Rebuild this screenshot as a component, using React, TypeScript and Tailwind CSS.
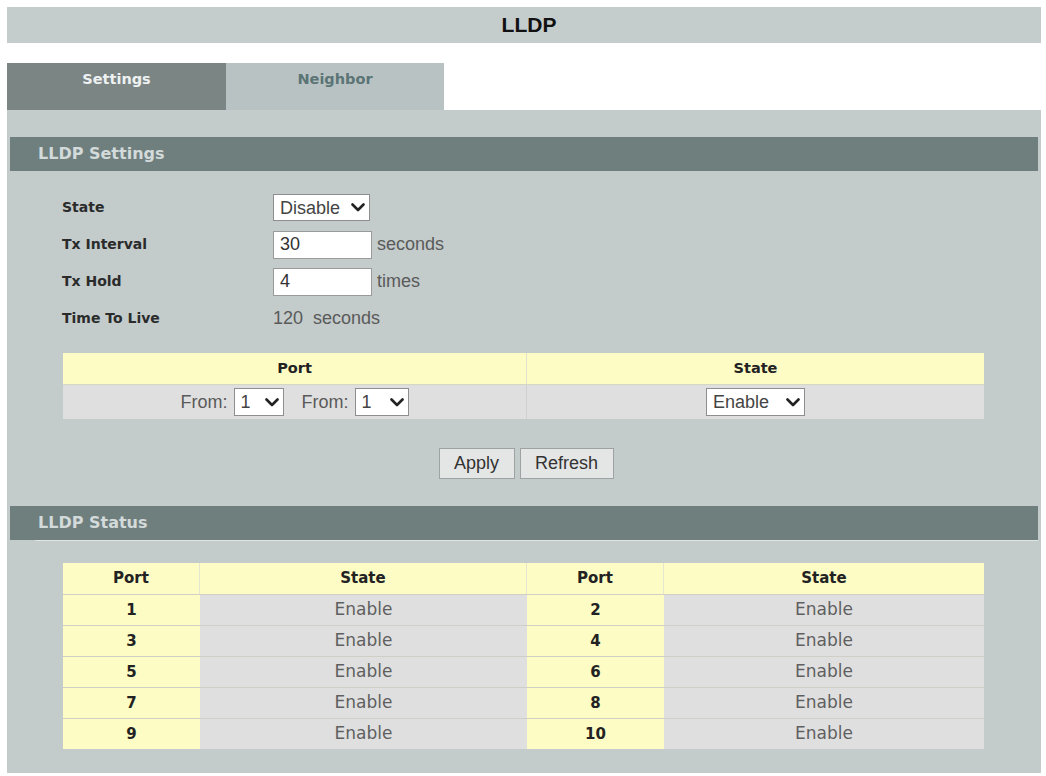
import React from "react";

const Chevron = () => (
  <svg width="14" height="9" viewBox="0 0 14 9" className="shrink-0">
    <polyline points="1.5,1.5 7,7 12.5,1.5" fill="none" stroke="#222" strokeWidth="2.6" strokeLinecap="round" strokeLinejoin="round" />
  </svg>
);

const FakeSelect = ({ value, w }: { value: string; w: string }) => (
  <div className={`flex items-center justify-between h-[28px] bg-white border border-[#8e8e8e] pl-[6px] pr-[4px] ${w}`}>
    <span className="text-[18px] leading-none text-[#444]">{value}</span>
    <Chevron />
  </div>
);

const statusRows = [
  ["1", "2"],
  ["3", "4"],
  ["5", "6"],
  ["7", "8"],
  ["9", "10"],
];

export default function App() {
  return (
    <div className="w-[1046px] h-[776px] bg-white pt-[7px] pl-[7px] pr-[5px] font-['Liberation_Sans',Arial,sans-serif] overflow-hidden">
      {/* Title bar */}
      <div className="h-[36px] bg-[#c5cdcc] flex items-center justify-center pl-[10px]">
        <span className="text-[21px] font-bold text-[#111] font-['Liberation_Sans',Arial,sans-serif]">LLDP</span>
      </div>

      {/* Tabs */}
      <div className="mt-[20px] flex h-[47px]">
        <div className="w-[219px] bg-[#7b8584] flex justify-center pt-[6px] text-[14.5px] font-bold text-[#eef1f1] font-['DejaVu_Sans',Verdana,sans-serif]">
          Settings
        </div>
        <div className="w-[218px] bg-[#b9c2c2] flex justify-center pt-[6px] text-[14.5px] font-bold text-[#5b7476] font-['DejaVu_Sans',Verdana,sans-serif]">
          Neighbor
        </div>
      </div>

      {/* Panel */}
      <div className="bg-[#c3cbcb] h-[663px] pt-[27px] px-[3px]">
        {/* LLDP Settings header */}
        <div className="h-[34px] bg-[#6f7f7e] flex items-center pl-[28px]">
          <span className="text-[16px] font-bold text-[#d3dada] font-['DejaVu_Sans',Verdana,sans-serif]">LLDP Settings</span>
        </div>

        {/* Form */}
        <div className="pl-[52px] pt-[18px]">
          <div className="flex items-center h-[37px]">
            <div className="w-[211px] text-[14px] font-bold text-[#2b2b2b] font-['DejaVu_Sans',Verdana,sans-serif]">State</div>
            <div className="flex items-center justify-between h-[27px] w-[97px] bg-white border border-[#8e8e8e] pl-[6px] pr-[4px]">
              <span className="text-[18px] leading-none text-[#444]">Disable</span>
              <Chevron />
            </div>
          </div>
          <div className="flex items-center h-[37px]">
            <div className="w-[211px] text-[14px] font-bold text-[#2b2b2b] font-['DejaVu_Sans',Verdana,sans-serif]">Tx Interval</div>
            <input
              readOnly
              value="30"
              className="h-[28px] w-[99px] bg-white border border-[#9a9a9a] px-[6px] text-[18px] text-[#333] outline-none"
            />
            <span className="ml-[5px] text-[18px] text-[#5a5a5a]">seconds</span>
          </div>
          <div className="flex items-center h-[37px]">
            <div className="w-[211px] text-[14px] font-bold text-[#2b2b2b] font-['DejaVu_Sans',Verdana,sans-serif]">Tx Hold</div>
            <input
              readOnly
              value="4"
              className="h-[28px] w-[99px] bg-white border border-[#9a9a9a] px-[6px] text-[18px] text-[#333] outline-none"
            />
            <span className="ml-[5px] text-[18px] text-[#5a5a5a]">times</span>
          </div>
          <div className="flex items-center h-[37px]">
            <div className="w-[211px] text-[14px] font-bold text-[#2b2b2b] font-['DejaVu_Sans',Verdana,sans-serif]">Time To Live</div>
            <span className="text-[18px] text-[#5a5a5a] whitespace-pre">120  seconds</span>
          </div>
        </div>

        {/* Port / State table */}
        <div className="ml-[53px] mr-[54px] mt-[16px]">
          <div className="flex h-[32px] bg-[#fcfcc4] border-b border-[#d6d6c4]">
            <div className="w-[464px] flex items-center justify-center border-r border-[#e2e2cc] text-[14.5px] font-bold text-[#222] font-['DejaVu_Sans',Verdana,sans-serif]">Port</div>
            <div className="flex-1 flex items-center justify-center text-[14.5px] font-bold text-[#222] font-['DejaVu_Sans',Verdana,sans-serif]">State</div>
          </div>
          <div className="flex h-[34px] bg-[#dfdfdf]">
            <div className="w-[464px] flex items-center justify-center gap-[6px] border-r border-[#d0d0d0]">
              <span className="text-[18px] text-[#5a5a5a]">From:</span>
              <FakeSelect value="1" w="w-[50px]" />
              <span className="ml-[12px] text-[18px] text-[#5a5a5a]">From:</span>
              <FakeSelect value="1" w="w-[54px]" />
            </div>
            <div className="flex-1 flex items-center justify-center">
              <FakeSelect value="Enable" w="w-[99px]" />
            </div>
          </div>
        </div>

        {/* Buttons */}
        <div className="flex justify-center gap-[5px] mt-[29px] pl-[4px]">
          <button className="h-[31px] w-[76px] bg-[#e4e6e6] border border-[#9da3a3] text-[18px] text-[#333]">Apply</button>
          <button className="h-[31px] w-[94px] bg-[#e4e6e6] border border-[#9da3a3] text-[18px] text-[#333]">Refresh</button>
        </div>

        {/* LLDP Status header */}
        <div className="mt-[27px] h-[34px] bg-[#6f7f7e] flex items-center pl-[28px]">
          <span className="text-[16px] font-bold text-[#d3dada] font-['DejaVu_Sans',Verdana,sans-serif]">LLDP Status</span>
        </div>
        <div className="ml-[25px] h-[1px] bg-[#dfe5e5]" />

        {/* Status table */}
        <div className="ml-[53px] mr-[54px] mt-[22px]">
          <div className="flex h-[31px] bg-[#fcfcc4]">
            <div className="w-[137px] flex items-center justify-center border-r border-[#e6e6d0] text-[15px] font-bold text-[#222] font-['DejaVu_Sans',Verdana,sans-serif]">Port</div>
            <div className="w-[327px] flex items-center justify-center border-r border-[#e6e6d0] text-[15px] font-bold text-[#222] font-['DejaVu_Sans',Verdana,sans-serif]">State</div>
            <div className="w-[137px] flex items-center justify-center border-r border-[#e6e6d0] text-[15px] font-bold text-[#222] font-['DejaVu_Sans',Verdana,sans-serif]">Port</div>
            <div className="flex-1 flex items-center justify-center text-[15px] font-bold text-[#222] font-['DejaVu_Sans',Verdana,sans-serif]">State</div>
          </div>
          {statusRows.map(([a, b]) => (
            <div key={a} className="flex h-[31px] border-t border-[#cfcfc6]">
              <div className="w-[137px] bg-[#fcfcc4] flex items-center justify-center text-[15px] font-bold text-[#222] font-['DejaVu_Sans',Verdana,sans-serif]">{a}</div>
              <div className="w-[327px] bg-[#dfdfdf] flex items-center justify-center text-[17px] text-[#5f5f5f] font-['DejaVu_Sans',Verdana,sans-serif]">Enable</div>
              <div className="w-[137px] bg-[#fcfcc4] flex items-center justify-center text-[15px] font-bold text-[#222] font-['DejaVu_Sans',Verdana,sans-serif]">{b}</div>
              <div className="flex-1 bg-[#dfdfdf] flex items-center justify-center text-[17px] text-[#5f5f5f] font-['DejaVu_Sans',Verdana,sans-serif]">Enable</div>
            </div>
          ))}
        </div>
      </div>
    </div>
  );
}
